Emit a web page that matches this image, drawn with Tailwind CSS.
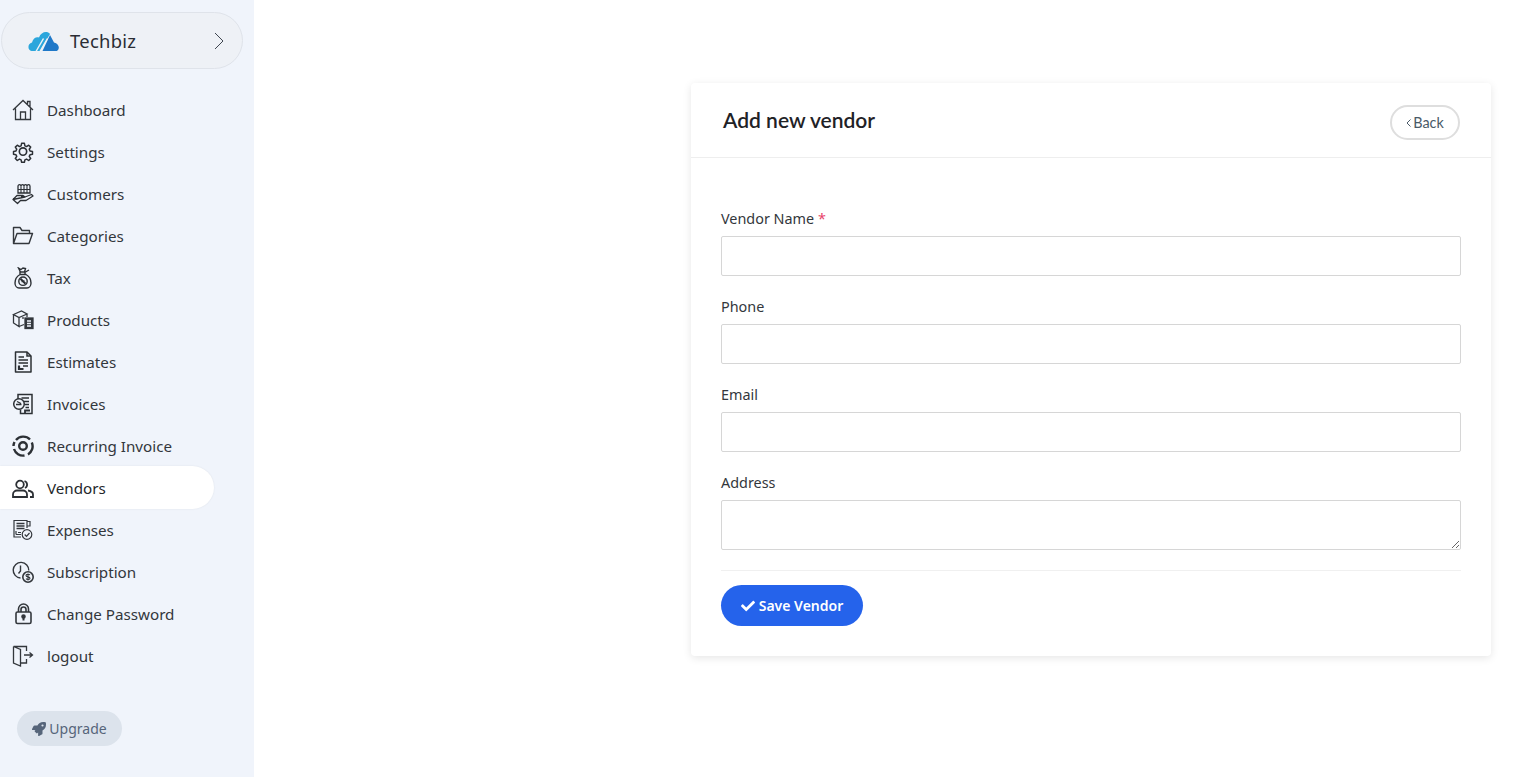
<!DOCTYPE html>
<html lang="en">
<head>
<meta charset="utf-8">
<title>Add new vendor</title>
<script src="https://cdn.jsdelivr.net/npm/@tailwindcss/browser@4"></script>
</head>
<body class="bg-white font-['Noto_Sans',sans-serif] overflow-hidden">
<div class="flex h-[777px] w-[1522px]">
  <aside class="w-[254px] h-full bg-[#f0f4fb] flex flex-col shrink-0">
    <div class="mt-[12px] ml-[1px] w-[242px] h-[57px] rounded-full border border-[#dfe3ea] bg-[#eef1f6] flex items-center pl-[26px] pr-[17px]">
      <svg class="w-[31px] h-[22px] shrink-0" viewBox="0 0 31 22">
        <path d="M3.500 21C-.5 20.500 -.8 13.500 4 12.500 5 8 8.500 6.500 11 7.500 13 2 19 .5 22 4 L12 21Z" fill="#2ba6dc"/>
        <path d="M22 5L26 12.500C30 13 31.500 17 30.500 19 30 20.500 29 21 28 21H14.500Z" fill="#1f78c8"/>
        <path d="M8 21.500L15.500 8.500M12 21.500L19.500 8.500" stroke="#eef1f6" stroke-width="1.500" fill="none"/>
      </svg>
      <span class="ml-[11px] pt-[2px] text-[18.4px] leading-none tracking-[0.3px] text-[#2a2d34]">Techbiz</span>
      <svg class="ml-auto -translate-x-[1px] w-[10px] h-[18px]" viewBox="0 0 10 18" fill="none" stroke="#3f4650" stroke-width="1"><path d="M1 1l8 8-8 8"/></svg>
    </div>
    <nav class="mt-[20px] flex flex-col text-[15.2px] text-[#33373c]">
      <a class="h-[42px] flex items-center pl-[12px]">
        <svg class="w-[22px] h-[22px] mr-[13px] shrink-0" viewBox="0 0 22 22" fill="none" stroke="#33373c" stroke-width="1.300"><path d="M1 11L11 1.500 21 11M3.500 9.500V20.500H18.500V9.500M8.500 20.500V13H13.500V20.500M15.500 5V2.500H18V8"/></svg>
        <span>Dashboard</span>
      </a>
      <a class="h-[42px] flex items-center pl-[12px]">
        <svg class="w-[22px] h-[22px] mr-[13px] shrink-0" viewBox="0 0 24 24" fill="none" stroke="#2c3035" stroke-width="1.800"><circle cx="12" cy="11.500" r="4"/><path d="M10.300 2h3.400l.6 3 2 .9 2.600-1.700 2.400 2.400-1.700 2.600.9 2 3 .6v3.400l-3 .6-.9 2 1.700 2.600-2.400 2.400-2.600-1.700-2 .9-.6 3h-3.400l-.6-3-2-.9-2.600 1.700-2.400-2.400 1.700-2.600-.9-2-3-.6v-3.400l3-.6.9-2-1.700-2.600 2.400-2.400 2.600 1.700 2-.9z" transform="translate(12 12) scale(.9) translate(-12 -12.500)" stroke-linejoin="round"/></svg>
        <span>Settings</span>
      </a>
      <a class="h-[42px] flex items-center pl-[12px]">
        <svg class="w-[22px] h-[22px] mr-[13px] shrink-0" viewBox="0 0 22 22" fill="none" stroke="#2c3035" stroke-width="1.300"><path d="M6 3.200a1.500 1.500 0 013 0 1.500 1.500 0 013 0 1.500 1.500 0 013 0 1.500 1.500 0 013 0V10H6z"/><path d="M6 6.500H18M9 3.200V10M12 3.200V10M15 3.200V10" stroke-width="1.100"/><path d="M1 16.500L5 12.500H11L13 14H9M13 14L19.500 11.500 21 13 14 17.500H8.500L5.500 20.500 1 16.500Z" stroke-linejoin="round"/></svg>
        <span>Customers</span>
      </a>
      <a class="h-[42px] flex items-center pl-[12px]">
        <svg class="w-[22px] h-[22px] mr-[13px] shrink-0" viewBox="0 0 22 22" fill="none" stroke="#33373c" stroke-width="1.400"><path d="M1.500 18.500V2.500H8L10 5.500H17.500V8.500M1.500 18.500H17L20.500 8.500H5L1.500 18.500Z" stroke-linejoin="round"/></svg>
        <span>Categories</span>
      </a>
      <a class="h-[42px] flex items-center pl-[12px]">
        <svg class="w-[22px] h-[22px] mr-[13px] shrink-0" viewBox="0 0 22 22" fill="none" stroke="#2c3035" stroke-width="1.400"><path d="M6.500 1L9 2.500 11 1 13.500 1.500 12.500 5H8.500zM8 5H13V7.500H8zM8 7.500C4.500 9.500 3 13 3 16c0 3 2 5 4 5h8c2 0 4-2 4-5 0-3-1.500-6.500-5-8.500zM13.500 5L17 3"/><circle cx="11" cy="14.200" r="4.200"/><path d="M8.500 11.700l5 5M9.500 14.200h3" stroke-width="2"/></svg>
        <span>Tax</span>
      </a>
      <a class="h-[42px] flex items-center pl-[12px]">
        <svg class="w-[22px] h-[22px] mr-[13px] shrink-0" viewBox="0 0 22 22" fill="none" stroke="#33373c" stroke-width="1.300"><path d="M1.500 5.500L9.500 2 15 5 7 8.500zM1.500 5.500V14L7 17.500V8.500M11 6.500V10M15 5V8"/><rect x="13" y="9" width="8" height="10.500" fill="#33373c"/><path d="M15 12h4M15 14.500h4M15 17h4" stroke="#f0f4fb"/><path d="M7 17.500L12 15.500"/></svg>
        <span>Products</span>
      </a>
      <a class="h-[42px] flex items-center pl-[12px]">
        <svg class="w-[22px] h-[22px] mr-[13px] shrink-0" viewBox="0 0 22 22" fill="none" stroke="#2c3035" stroke-width="1.500"><path d="M3.500 1H15L19 5V21H3.500Z" stroke-linejoin="round"/><path d="M15 1V5H19"/><path d="M6.500 6H12M6.500 9H16M6.500 12H16M11 15H16"/><path d="M7 14.500v3.500h4.500" stroke-width="2.200"/></svg>
        <span>Estimates</span>
      </a>
      <a class="h-[42px] flex items-center pl-[12px]">
        <svg class="w-[22px] h-[22px] mr-[13px] shrink-0" viewBox="0 0 22 22" fill="none" stroke="#2c3035" stroke-width="1.500"><path d="M6 6V1.500H20V20.500H8.500V16.500"/><path d="M9.500 5H17M12 8.500H17M13 11.500H17M13.500 14.500H17" /><circle cx="7" cy="11" r="5.300" fill="#f0f4fb"/><path d="M4 11.500h5.500M5 8.500l4 2" stroke-width="1.300"/><path d="M13 20.500v-3h5" stroke-width="1.800"/></svg>
        <span>Invoices</span>
      </a>
      <a class="h-[42px] flex items-center pl-[12px]">
        <svg class="w-[22px] h-[22px] mr-[13px] shrink-0" viewBox="0 0 22 22" fill="none" stroke="#2c3035" stroke-width="2.400"><circle cx="11" cy="11" r="3.800"/><path d="M4 5A9.500 9.500 0 0118 4.500M19.800 7.500A9.500 9.500 0 0116 19.500M12.500 20.500A9.500 9.500 0 012 14M1.500 11A9.500 9.500 0 012.500 7"/></svg>
        <span>Recurring Invoice</span>
      </a>
      <a class="h-[43px] -mt-[1px] pt-[2px] w-[214px] flex items-center pl-[12px] bg-white rounded-r-full shadow-[0_0_2px_rgba(0,0,0,0.08)] text-[#24272b]">
        <svg class="w-[22px] h-[22px] mr-[13px] shrink-0" viewBox="0 0 22 22" fill="none" stroke="#2c3035" stroke-width="1.800"><circle cx="8" cy="6.500" r="3.800"/><path d="M1 19V16.500C1 14 3 12.500 5 12.500H11C13 12.500 15 14 15 16.500V19Z"/><path d="M12.500 3A3.800 3.800 0 0113 10M16 12.500C19 13 21 14.500 21 16.500V19H18"/></svg>
        <span>Vendors</span>
      </a>
      <a class="h-[42px] flex items-center pl-[12px]">
        <svg class="w-[22px] h-[22px] mr-[13px] shrink-0" viewBox="0 0 22 22" fill="none" stroke="#33373c" stroke-width="1.200"><path d="M15 9V1.500H2V18H9"/><path d="M4.500 4.500H12.500M4.500 7H12.500M4.500 9.500H12.500" stroke-width="1.500"/><path d="M15 2.500H18V7H15"/><path d="M4 15.500V12M4 15.500H9M6 13.500H9"/><circle cx="15" cy="15.500" r="4.800"/><path d="M12.700 15.500l1.800 1.800 3-3.300"/></svg>
        <span>Expenses</span>
      </a>
      <a class="h-[42px] flex items-center pl-[12px]">
        <svg class="w-[22px] h-[22px] mr-[13px] shrink-0" viewBox="0 0 22 22" fill="none" stroke="#33373c" stroke-width="1.400"><path d="M8.500 17A7.800 7.800 0 1116.800 9.500"/><path d="M8.500 4.500V10L6.500 12.500"/><circle cx="16" cy="16" r="5.200" stroke-width="1.600"/><path d="M18 14c-1-1.300-4-1-4 .6 0 1.800 4 .8 4 2.700 0 1.500-3 1.700-4 .4M16 12.500v7" stroke-width="1.100"/></svg>
        <span>Subscription</span>
      </a>
      <a class="h-[42px] flex items-center pl-[12px]">
        <svg class="w-[22px] h-[22px] mr-[13px] shrink-0" viewBox="0 0 22 22" fill="none" stroke="#33373c" stroke-width="1.600"><rect x="4" y="9" width="15" height="11.500" rx="1.500"/><path d="M6.500 9V6a5 5 0 0110 0V9M9 9V6.500a2.500 2.500 0 015 0V9"/><circle cx="11.500" cy="13.500" r="1.500" fill="#33373c"/><path d="M11.500 14v3.500" stroke-width="2"/></svg>
        <span>Change Password</span>
      </a>
      <a class="h-[42px] flex items-center pl-[12px]">
        <svg class="w-[22px] h-[22px] mr-[13px] shrink-0" viewBox="0 0 22 22" fill="none" stroke="#33373c" stroke-width="1.300"><path d="M1.500 1.500H14.500V6M14.500 14V18H8.500M1.500 1.500V18L8.500 21V4.500L1.500 1.500"/><path d="M12 10H20M17.500 7.500L20.500 10 17.500 12.500"/></svg>
        <span>logout</span>
      </a>
    </nav>
    <div class="mt-[34px] ml-[17px] w-[105px] h-[35px] rounded-full bg-[#dce3ec] flex items-center justify-center gap-[3px] text-[14px] text-[#56657a]">
      <svg class="w-[14px] h-[14px]" viewBox="0 0 512 512" fill="#56657a"><path d="M505.05 19.1a15.89 15.89 0 0 0-12.2-12.2C460.65 0 435.46 0 410.36 0c-103.2 0-165.1 55.2-211.29 128H94.87A48 48 0 0 0 52 154.49l-49.42 98.8A24 24 0 0 0 24.07 288h103.77l-22.47 22.47a32 32 0 0 0 0 45.25l50.9 50.91a32 32 0 0 0 45.26 0L224 384.16V488a24 24 0 0 0 34.7 21.49l98.7-49.39a47.91 47.91 0 0 0 26.5-42.9V312.79c72.59-46.3 128-108.4 128-211.09.1-25.2.1-50.4-6.85-82.6zM384 168a40 40 0 1 1 40-40 40 40 0 0 1-40 40z"/></svg>
      <span>Upgrade</span>
    </div>
  </aside>
  <main class="flex-1 min-w-0 flex justify-end">
    <section class="mt-[83px] mr-[31px] w-[800px] h-[573px] bg-white rounded-[4px] shadow-[0_2px_8px_rgba(0,0,0,0.10)]">
      <header class="h-[75px] border-b border-[#eeeeee] flex items-start justify-between pl-[32px] pr-[31px]">
        <h1 class="mt-[22px] text-[21px] leading-[29px] font-semibold font-['Lato',sans-serif] text-[#1f2226]">Add new vendor</h1>
        <button class="mt-[22px] w-[70px] h-[35px] rounded-full border-2 border-[#dedede] flex items-center justify-center font-['Lato',sans-serif] text-[14.4px] text-[#4a5a68] gap-[2px]">
          <svg class="w-[5px] h-[8px]" viewBox="0 0 5 8" fill="none" stroke="#4a5a68" stroke-width="1"><path d="M4.500.5L1 4l3.500 3.500"/></svg>
          <span>Back</span>
        </button>
      </header>
      <form class="px-[30px] pt-[50px]">
        <div class="h-[88px]">
          <label class="block h-[28px] text-[14.4px] leading-[22px] text-[#33373c]">Vendor Name <span class="text-[#e8436a]">*</span></label>
          <input type="text" class="block w-full h-[40px] border border-[#d6d6d6] rounded-[2px] bg-white">
        </div>
        <div class="h-[88px]">
          <label class="block h-[28px] text-[14.4px] leading-[22px] text-[#33373c]">Phone</label>
          <input type="text" class="block w-full h-[40px] border border-[#d6d6d6] rounded-[2px] bg-white">
        </div>
        <div class="h-[88px]">
          <label class="block h-[28px] text-[14.4px] leading-[22px] text-[#33373c]">Email</label>
          <input type="text" class="block w-full h-[40px] border border-[#d6d6d6] rounded-[2px] bg-white">
        </div>
        <div>
          <label class="block h-[28px] text-[14.4px] leading-[22px] text-[#33373c]">Address</label>
          <textarea class="block w-full h-[50px] border border-[#d6d6d6] rounded-[2px] bg-white"></textarea>
        </div>
        <div class="mt-[20px] border-t border-[#f0f0f0]"></div>
        <button type="button" class="mt-[14px] w-[142px] h-[41px] rounded-full bg-[#2563eb] text-white text-[14px] font-semibold flex items-center justify-center gap-[4px]">
          <svg class="w-[14px] h-[14px]" viewBox="0 0 512 512" fill="#ffffff"><path d="M173.898 439.404l-166.4-166.4c-9.997-9.997-9.997-26.206 0-36.204l36.203-36.204c9.997-9.998 26.207-9.998 36.204 0L192 312.69 432.095 72.596c9.997-9.997 26.207-9.997 36.204 0l36.203 36.204c9.997 9.997 9.997 26.206 0 36.204l-294.4 294.401c-9.998 9.997-26.207 9.997-36.204-.001z"/></svg>
          <span>Save Vendor</span>
        </button>
      </form>
    </section>
  </main>
</div>
</body>
</html>
